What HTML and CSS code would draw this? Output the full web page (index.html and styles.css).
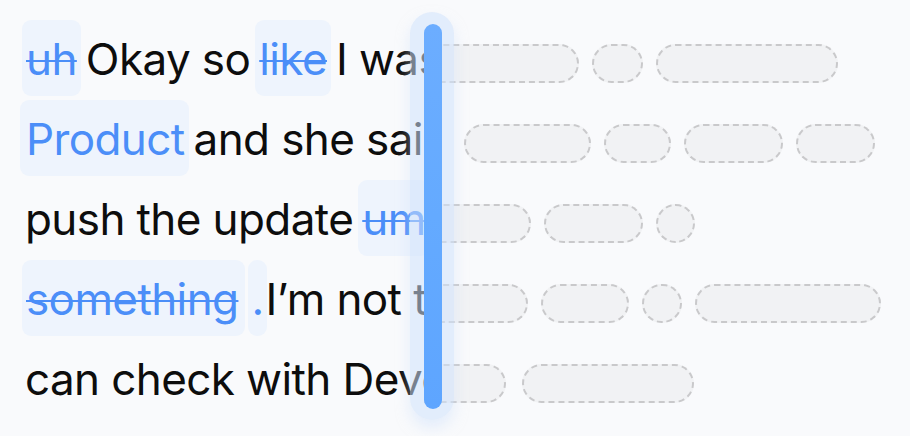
FILE: index.html
```html
<!DOCTYPE html>
<html lang="en">
<head>
<meta charset="utf-8">
<title>Transcript cleanup</title>
<link rel="stylesheet" href="styles.css">
</head>
<body>
<div class="stage">
  <div class="text-col">
    <div class="row">
      <span class="tok filler">uh</span>
      <span class="tok">Okay so</span>
      <span class="tok filler">like</span>
      <span class="tok">I was talking to Sarah from</span>
    </div>
    <div class="row">
      <span class="tok fix">Product</span>
      <span class="tok">and she said we should</span>
    </div>
    <div class="row">
      <span class="tok">push the update</span>
      <span class="tok filler">um</span>
      <span class="tok">to next week or</span>
    </div>
    <div class="row">
      <span class="tok filler wide">something</span>
      <span class="tok fix dot">.</span>
      <span class="tok after-dot">I’m not totally sure but we</span>
    </div>
    <div class="row">
      <span class="tok">can check with Devon tomorrow</span>
    </div>
  </div>
  <div class="ghost-col">
    <div class="ghost-row">
      <span class="pill lead" style="width:175px"></span>
      <span class="pill" style="width:51px"></span>
      <span class="pill" style="width:182px"></span>
    </div>
    <div class="ghost-row">
      <span class="pill indent" style="width:127px"></span>
      <span class="pill" style="width:67px"></span>
      <span class="pill" style="width:99px"></span>
      <span class="pill" style="width:79px"></span>
    </div>
    <div class="ghost-row">
      <span class="pill lead" style="width:127px"></span>
      <span class="pill" style="width:99px"></span>
      <span class="pill" style="width:39px"></span>
    </div>
    <div class="ghost-row">
      <span class="pill lead" style="width:124px"></span>
      <span class="pill" style="width:88px"></span>
      <span class="pill" style="width:40px"></span>
      <span class="pill" style="width:186px"></span>
    </div>
    <div class="ghost-row">
      <span class="pill lead" style="width:102px"></span>
      <span class="pill wide-gap" style="width:172px"></span>
    </div>
  </div>
  <div class="scanner">
    <div class="scanner-bar"></div>
  </div>
</div>
</body>
</html>
```
FILE: styles.css
```css
html, body {
  margin: 0;
  padding: 0;
}

body {
  background: #f9fafc;
  font-family: Inter, "Liberation Sans", Arial, sans-serif;
  color: #0d0d0d;
  width: 910px;
  height: 436px;
  overflow: hidden;
}

.stage {
  position: relative;
  display: flex;
  padding-top: 18px;
  height: 418px;
}

.text-col {
  width: 424px;
  flex-shrink: 0;
  overflow: hidden;
}

.row {
  display: flex;
  align-items: center;
  gap: 5px;
  height: 80px;
  padding-left: 22px;
  white-space: nowrap;
}

.tok {
  display: block;
  box-sizing: border-box;
  height: 76px;
  padding-top: 3px;
  line-height: 73px;
  font-size: 44px;
  letter-spacing: -0.6px;
  flex-shrink: 0;
  white-space: pre;
}

.row > .tok:first-child:not(.filler):not(.fix) {
  padding-left: 3px;
}

.filler,
.fix {
  background: #eef4fd;
  border-radius: 9px;
  padding-left: 4px;
  padding-right: 4px;
  color: #4b8ef8;
}

.filler {
  text-decoration: line-through;
  text-decoration-thickness: 2px;
  text-decoration-color: #4b8ef8;
}

.filler.wide {
  padding-right: 7px;
}

.row > .fix:first-child {
  margin-left: -2px;
  padding-left: 6px;
}

.dot {
  margin-left: -2px;
  padding-left: 3px;
  padding-right: 3px;
}

.after-dot {
  margin-left: -6px;
}

.ghost-col {
  flex: 1;
  overflow: hidden;
}

.ghost-row {
  display: flex;
  gap: 13px;
  height: 80px;
  box-sizing: border-box;
  padding-top: 26px;
  white-space: nowrap;
}

.pill {
  display: block;
  flex-shrink: 0;
  box-sizing: border-box;
  height: 39px;
  border: 2px dashed #c9c9cb;
  border-radius: 20px;
  background: #f1f2f4;
}

.pill.lead {
  margin-left: -20px;
}

.pill.indent {
  margin-left: 40px;
}

.pill.wide-gap {
  margin-left: 3px;
}

.scanner {
  position: absolute;
  left: 410px;
  top: 12px;
  width: 44px;
  height: 408px;
  border-radius: 22px;
  background: rgba(208, 226, 251, 0.55);
  box-shadow: 0 8px 14px rgba(208, 226, 251, 0.5);
}

.scanner-bar {
  position: absolute;
  left: 14px;
  top: 12px;
  width: 18px;
  bottom: 11px;
  border-radius: 9px;
  background: linear-gradient(180deg, #6cadff 0%, #64aaff 50%, #5ea5ff 100%);
}
```
